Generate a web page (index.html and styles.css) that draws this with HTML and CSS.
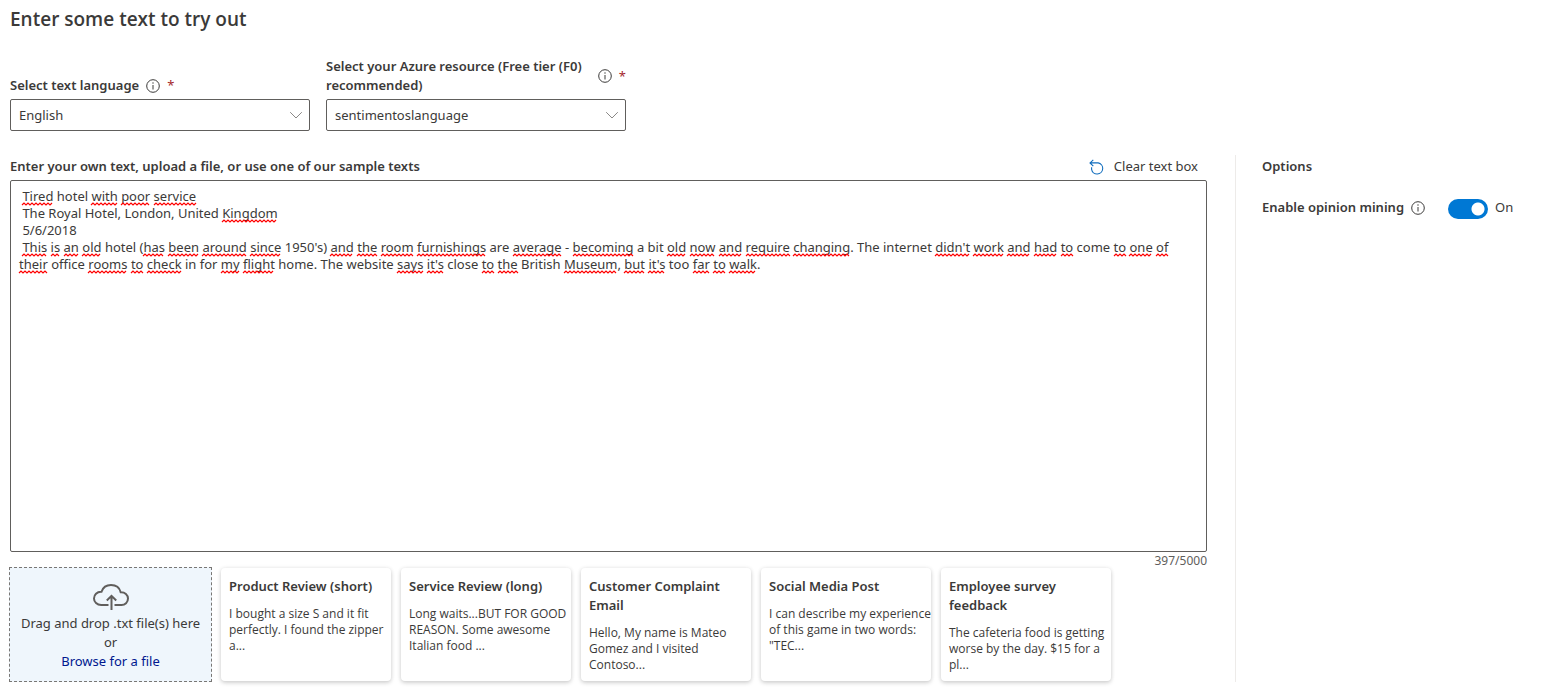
FILE: index.html
```html
<!DOCTYPE html>
<html lang="en">
<head>
<meta charset="utf-8">
<title>Sentiment analysis try-out</title>
<link rel="stylesheet" href="styles.css">
</head>
<body>
<svg class="symbols" aria-hidden="true">
  <symbol id="info" viewBox="0 0 14 14">
    <circle cx="7" cy="7" r="6.3" fill="none" stroke="currentColor" stroke-width="1"/>
    <path d="M7 6v4.5" fill="none" stroke="currentColor" stroke-width="1"/>
    <circle cx="7" cy="4" r=".7" fill="currentColor"/>
  </symbol>
  <symbol id="chevron" viewBox="0 0 14 14">
    <path d="M1.200 4.200L7 10l5.800-5.800" fill="none" stroke="currentColor" stroke-width="1"/>
  </symbol>
</svg>
<main class="page">
  <h1 class="title">Enter some text to try out</h1>

  <div class="selectors">
    <div class="field">
      <div class="field-label">
        <label for="language">Select text language</label>
        <svg class="info"><use href="#info"/></svg>
        <span class="required">*</span>
      </div>
      <div class="select-box">
        <select id="language"><option>English</option></select>
        <svg class="chevron"><use href="#chevron"/></svg>
      </div>
    </div>
    <div class="field">
      <div class="field-label">
        <label for="resource">Select your Azure resource (Free tier (F0) recommended)</label>
        <svg class="info"><use href="#info"/></svg>
        <span class="required">*</span>
      </div>
      <div class="select-box">
        <select id="resource"><option>sentimentoslanguage</option></select>
        <svg class="chevron"><use href="#chevron"/></svg>
      </div>
    </div>
  </div>

  <div class="workspace">
    <section class="editor">
      <div class="editor-head">
        <label class="strong" for="text">Enter your own text, upload a file, or use one of our sample texts</label>
        <button class="clear" type="button">
          <svg class="undo" viewBox="0 0 16 16"><path d="M4.300.8L1 3.900l3.300 3.200M1.200 3.900H9.200a5.600 5.600 0 1 1-6.600 6.400V8.200" fill="none" stroke="currentColor" stroke-width="1.100"/></svg>
          Clear text box
        </button>
      </div>
      <div class="text-wrap">
        <textarea id="text" rows="21" spellcheck="false"> Tired hotel with poor service
 The Royal Hotel, London, United Kingdom
 5/6/2018
 This is an old hotel (has been around since 1950's) and the room furnishings are average - becoming a bit old now and require changing. The internet didn't work and had to come to one of their office rooms to check in for my flight home. The website says it's close to the British Museum, but it's too far to walk.</textarea>
        <svg class="spelling" aria-hidden="true"><path id="marks"/></svg>
      </div>
      <div class="counter">397/5000</div>
      <div class="samples">
        <div class="dropzone">
          <svg class="cloud" viewBox="0 0 36 27">
            <path d="M15.500 21H8.200C4 21 1 18.100 1 14.500c0-3.800 3-6.700 7-6.700h.5C9.800 4 13.500 1.100 18 1.100c5.200 0 8.600 2.900 9.700 7.200 4.200-.2 7.300 2.700 7.300 6.300 0 3.700-3 6.400-6.500 6.400H21.500M18.500 26V12.500M13.800 16.500l4.700-4.700 4.700 4.700" fill="none" stroke="currentColor" stroke-width="2"/>
          </svg>
          <span>Drag and drop .txt file(s) here</span>
          <span>or</span>
          <a href="#text">Browse for a file</a>
        </div>
        <button class="card" type="button"><span class="card-title">Product Review (short)</span><span class="card-text">I bought a size S and it fit perfectly. I found the zipper a...</span></button>
        <button class="card" type="button"><span class="card-title">Service Review (long)</span><span class="card-text">Long waits...BUT FOR GOOD REASON. Some awesome Italian food ...</span></button>
        <button class="card" type="button"><span class="card-title">Customer Complaint Email</span><span class="card-text">Hello, My name is Mateo Gomez and I visited Contoso...</span></button>
        <button class="card" type="button"><span class="card-title">Social Media Post</span><span class="card-text">I can describe my experience of this game in two words: "TEC...</span></button>
        <button class="card" type="button"><span class="card-title">Employee survey feedback</span><span class="card-text">The cafeteria food is getting worse by the day. $15 for a pl...</span></button>
      </div>
    </section>
    <aside class="options">
      <h2 class="strong">Options</h2>
      <div class="option-row">
        <label class="strong" for="mining">Enable opinion mining</label>
        <svg class="info"><use href="#info"/></svg>
        <input class="toggle" id="mining" type="checkbox" role="switch" checked>
        <span>On</span>
      </div>
    </aside>
  </div>
</main>
<script src="spelling.js"></script>
</body>
</html>
```
FILE: styles.css
```css
* { box-sizing: border-box; }
body {
  margin: 0;
  background: #fff;
  color: #3b3a39;
  font: 13px/19px "Noto Sans", "Open Sans", sans-serif;
}
button, select, textarea { font: inherit; color: inherit; }
.symbols { position: absolute; width: 0; height: 0; }
.page { padding: 6px 0 8px 10px; }
.title { margin: 0; font: 600 19px/26px "Open Sans", "Noto Sans", sans-serif; }
.strong, .field-label label { margin: 0; font-size: 13px; line-height: 19px; font-weight: 600; }

.selectors { display: flex; align-items: flex-end; gap: 16px; margin-top: 25px; }
.field { width: 300px; }
.field-label { display: flex; align-items: center; gap: 7px; padding-bottom: 4px; }
.info { flex: none; width: 14px; height: 14px; }
.required { color: #a4262c; line-height: 13px; }
.select-box { position: relative; }
.select-box select {
  display: block;
  width: 100%;
  height: 32px;
  padding: 0 28px 0 8px;
  appearance: none;
  border: 1px solid #605e5c;
  border-radius: 2px;
  background: #fff;
}
.chevron { position: absolute; top: 9px; right: 7px; width: 14px; height: 14px; color: #8a8886; pointer-events: none; }

.workspace { display: flex; margin-top: 24px; }
.editor { flex: 1; min-width: 0; margin-right: 28px; }
.editor-head { display: flex; align-items: center; justify-content: space-between; height: 25px; padding: 0 9px 2px 0; }
.clear { display: flex; align-items: center; gap: 9px; padding: 0; border: 0; background: none; }
.undo { width: 16px; height: 16px; color: #0f6cbd; }
.text-wrap { position: relative; }
.text-wrap textarea {
  display: block;
  width: 100%;
  padding: 7px 16px 6px 8px;
  border: 1px solid #605e5c;
  border-radius: 2px;
  line-height: 17px;
  resize: none;
  overflow: hidden;
  outline: 0;
}
.spelling { position: absolute; inset: 0; width: 100%; height: 100%; pointer-events: none; fill: none; stroke: #f00; stroke-width: 1.2; }
.counter { height: 15px; font-size: 12px; line-height: 17px; text-align: right; color: #605e5c; }

.samples { display: flex; gap: 10px; margin-left: -1px; }
.dropzone {
  display: flex;
  flex-direction: column;
  align-items: center;
  width: 203px;
  min-height: 115px;
  margin-right: -1px;
  padding: 16px 0 8px;
  border: 1px dashed #797775;
  background: #eff6fc;
}
.cloud { width: 36px; height: 27px; margin-bottom: 3px; color: #605e5c; }
.dropzone a { color: #00188f; text-decoration: none; }
.card {
  display: flex;
  flex-direction: column;
  width: 170px;
  margin: 1px 0;
  padding: 9px 0 7px 8px;
  border: 0;
  border-radius: 4px;
  background: #fff;
  box-shadow: 0 2px 4px rgba(0, 0, 0, .16), 0 0 4px rgba(0, 0, 0, .08);
  text-align: left;
}
.card-title { font-weight: 600; }
.card-text { margin-top: 10px; font: 12px/16px "Open Sans", "Noto Sans", sans-serif; }

.options { width: 307px; padding: 2px 0 0 26px; border-left: 1px solid #edebe9; }
.option-row { display: flex; align-items: center; gap: 7px; margin-top: 20px; }
.toggle {
  flex: none;
  appearance: none;
  width: 40px;
  height: 20px;
  margin: 3px 0 0 16px;
  border-radius: 10px;
  background: radial-gradient(circle at 30px 10px, #fff 6px, #0078d4 7px);
}
```
FILE: spelling.js
```javascript
// Draws a wavy line below each flagged word of the text box.
const box = document.getElementById("text");
// The flagged words of each line, in order of appearance
const flags = [
  "Tired with poor service",
  "Kingdom",
  "",
  "This is an old has been around since and the room furnishings average becoming old now and require changing didn't work and had to to one of their rooms to check my flight says it's to the Museum but it's far to walk"
].map(line => line.split(" "));

function draw() {
  const style = getComputedStyle(box);
  const pen = document.createElement("canvas").getContext("2d");
  pen.font = `${style.fontSize} ${style.fontFamily}`;
  const padLeft = parseFloat(style.paddingLeft);
  const left = padLeft + 1;
  const top = parseFloat(style.paddingTop) + 1;
  const step = parseFloat(style.lineHeight);
  const limit = box.clientWidth - padLeft - parseFloat(style.paddingRight);
  let row = 0, path = "";
  box.value.split("\n").forEach((line, n) => {
    const pending = [...(flags[n] || [])];
    let start = 0;
    for (const m of line.matchAll(/\S+/g)) {
      if (pen.measureText(line.slice(start, m.index + m[0].length)).width > limit) {
        start = m.index;
        row++;
      }
      const word = m[0].replace(/^\(|[.,)]+$/g, "");
      if (word !== pending[0]) continue;
      pending.shift();
      const at = m.index + m[0].indexOf(word);
      const x = Math.round(left + pen.measureText(line.slice(start, at)).width);
      const end = x + pen.measureText(word).width;
      const y = top + row * step + 16;
      path += `M${x} ${y + 1}`;
      for (let px = x + 2, up = true; px <= end; px += 2, up = !up) path += `L${px} ${up ? y - 1 : y + 1}`;
    }
    row++;
  });
  document.getElementById("marks").setAttribute("d", path);
}
document.fonts.ready.then(draw);
addEventListener("resize", draw);
box.addEventListener("input", draw);
```
